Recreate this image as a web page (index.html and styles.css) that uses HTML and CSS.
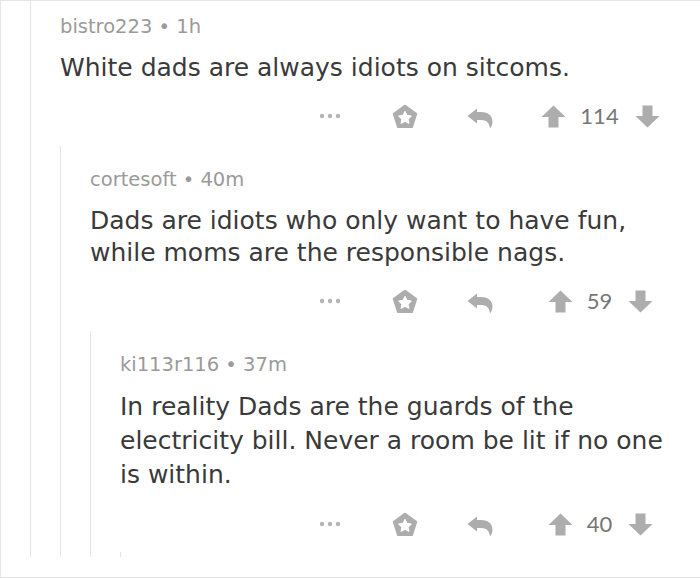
FILE: index.html
```html
<!DOCTYPE html>
<html lang="en">
<head>
<meta charset="utf-8">
<title>Comments</title>
<link rel="stylesheet" href="styles.css">
</head>
<body>
<div class="frame">
  <div class="thread">
    <article class="comment comment--first">
      <div class="meta">bistro223 • 1h</div>
      <p class="body">White dads are always idiots on sitcoms.</p>
      <div class="actions">
        <span class="action"><svg class="icon-dots" viewBox="0 0 22 6" width="22" height="6"><circle cx="3" cy="3" r="2.2"/><circle cx="11" cy="3" r="2.2"/><circle cx="19" cy="3" r="2.2"/></svg></span>
        <span class="action"><svg viewBox="0 0 26 25" width="26" height="25"><path class="fill" d="M13 2 L23.94 9.95 L19.76 22.8 H6.24 L2.06 9.95 Z" stroke-width="2.6" stroke-linejoin="round"/><path class="star" d="M13 7.6 L14.9 11.4 L19.1 12 L16 15 L16.8 19.1 L13 17.1 L9.2 19.1 L10 15 L6.9 12 L11.1 11.4 Z" stroke-width="1.2" stroke-linejoin="round"/></svg></span>
        <span class="action"><svg viewBox="0 0 26 26" width="26" height="26"><path class="solid" d="M0.5 13 L10 5.5 V9 H14.5 C21 9 25.5 13 25.5 18.5 C25.5 21.5 24.5 23.8 23 25.5 C22.5 20.5 20 17 14.5 17 H10 V20.5 Z"/></svg></span>
        <span class="vote">
          <svg viewBox="0 0 25 23" width="25" height="23"><path class="solid" d="M12.5 0.5 L24.5 12 H17.5 V22.5 H7.5 V12 H0.5 Z"/></svg>
          <span class="score">114</span>
          <svg viewBox="0 0 25 23" width="25" height="23"><path class="solid" d="M12.5 22.5 L24.5 11 H17.5 V0.5 H7.5 V11 H0.5 Z"/></svg>
        </span>
      </div>
    </article>
    <div class="thread">
      <article class="comment">
        <div class="meta">cortesoft • 40m</div>
        <p class="body">Dads are idiots who only want to have fun, while moms are the responsible nags.</p>
        <div class="actions">
          <span class="action"><svg class="icon-dots" viewBox="0 0 22 6" width="22" height="6"><circle cx="3" cy="3" r="2.2"/><circle cx="11" cy="3" r="2.2"/><circle cx="19" cy="3" r="2.2"/></svg></span>
          <span class="action"><svg viewBox="0 0 26 25" width="26" height="25"><path class="fill" d="M13 2 L23.94 9.95 L19.76 22.8 H6.24 L2.06 9.95 Z" stroke-width="2.6" stroke-linejoin="round"/><path class="star" d="M13 7.6 L14.9 11.4 L19.1 12 L16 15 L16.8 19.1 L13 17.1 L9.2 19.1 L10 15 L6.9 12 L11.1 11.4 Z" stroke-width="1.2" stroke-linejoin="round"/></svg></span>
          <span class="action"><svg viewBox="0 0 26 26" width="26" height="26"><path class="solid" d="M0.5 13 L10 5.5 V9 H14.5 C21 9 25.5 13 25.5 18.5 C25.5 21.5 24.5 23.8 23 25.5 C22.5 20.5 20 17 14.5 17 H10 V20.5 Z"/></svg></span>
          <span class="vote">
            <svg viewBox="0 0 25 23" width="25" height="23"><path class="solid" d="M12.5 0.5 L24.5 12 H17.5 V22.5 H7.5 V12 H0.5 Z"/></svg>
            <span class="score">59</span>
            <svg viewBox="0 0 25 23" width="25" height="23"><path class="solid" d="M12.5 22.5 L24.5 11 H17.5 V0.5 H7.5 V11 H0.5 Z"/></svg>
          </span>
        </div>
      </article>
      <div class="thread">
        <article class="comment comment--last">
          <div class="meta">ki113r116 • 37m</div>
          <p class="body body--loose">In reality Dads are the guards of the electricity bill. Never a room be lit if no one is within.</p>
          <div class="actions">
            <span class="action"><svg class="icon-dots" viewBox="0 0 22 6" width="22" height="6"><circle cx="3" cy="3" r="2.2"/><circle cx="11" cy="3" r="2.2"/><circle cx="19" cy="3" r="2.2"/></svg></span>
            <span class="action"><svg viewBox="0 0 26 25" width="26" height="25"><path class="fill" d="M13 2 L23.94 9.95 L19.76 22.8 H6.24 L2.06 9.95 Z" stroke-width="2.6" stroke-linejoin="round"/><path class="star" d="M13 7.6 L14.9 11.4 L19.1 12 L16 15 L16.8 19.1 L13 17.1 L9.2 19.1 L10 15 L6.9 12 L11.1 11.4 Z" stroke-width="1.2" stroke-linejoin="round"/></svg></span>
            <span class="action"><svg viewBox="0 0 26 26" width="26" height="26"><path class="solid" d="M0.5 13 L10 5.5 V9 H14.5 C21 9 25.5 13 25.5 18.5 C25.5 21.5 24.5 23.8 23 25.5 C22.5 20.5 20 17 14.5 17 H10 V20.5 Z"/></svg></span>
            <span class="vote">
              <svg viewBox="0 0 25 23" width="25" height="23"><path class="solid" d="M12.5 0.5 L24.5 12 H17.5 V22.5 H7.5 V12 H0.5 Z"/></svg>
              <span class="score">40</span>
              <svg viewBox="0 0 25 23" width="25" height="23"><path class="solid" d="M12.5 22.5 L24.5 11 H17.5 V0.5 H7.5 V11 H0.5 Z"/></svg>
            </span>
          </div>
        </article>
        <div class="thread thread--stub"></div>
      </div>
    </div>
  </div>
</div>
</body>
</html>
```

FILE: styles.css
```css
* {
  box-sizing: border-box;
}

body {
  margin: 0;
  background: #ffffff;
  font-family: "DejaVu Sans", "Noto Sans", sans-serif;
}

.frame {
  width: 700px;
  height: 578px;
  overflow: hidden;
  border-top: 1px solid #e6e6e6;
  border-left: 1px solid #e6e6e6;
  border-bottom: 1px solid #e2e2e2;
  padding-left: 29px;
}

.thread {
  border-left: 1px solid #e4e4e4;
  padding-left: 29px;
}

.thread--stub {
  height: 5px;
}

.comment {
  padding: 22px 0 17px;
}

.comment--first {
  padding-top: 14px;
}

.comment--last {
  padding-bottom: 15px;
}

.meta {
  font-size: 19.5px;
  line-height: 24px;
  color: #9a9a9a;
}

.body {
  margin: 13px 0 0;
  padding-right: 20px;
  font-size: 25px;
  line-height: 32px;
  color: #3a3a3a;
}

.body--loose {
  line-height: 34px;
}

.actions {
  display: grid;
  grid-template-columns: 75px 75px 75px 167px;
  justify-content: end;
  align-items: center;
  height: 26px;
  margin-top: 19px;
  padding-right: 16px;
}

.action {
  display: flex;
  justify-content: center;
  align-items: center;
}

.action svg,
.vote svg {
  display: block;
}

.icon-dots circle {
  fill: #b4b4b4;
}

.fill {
  fill: #adadad;
  stroke: #adadad;
}

.star {
  fill: #ffffff;
  stroke: #ffffff;
}

.solid {
  fill: #adadad;
}

.vote {
  display: flex;
  justify-content: center;
  align-items: center;
}

.score {
  font-family: Lato, "Noto Sans", sans-serif;
  font-size: 22px;
  line-height: 26px;
  color: #767676;
  margin: 0 16px 0 14px;
}
```
